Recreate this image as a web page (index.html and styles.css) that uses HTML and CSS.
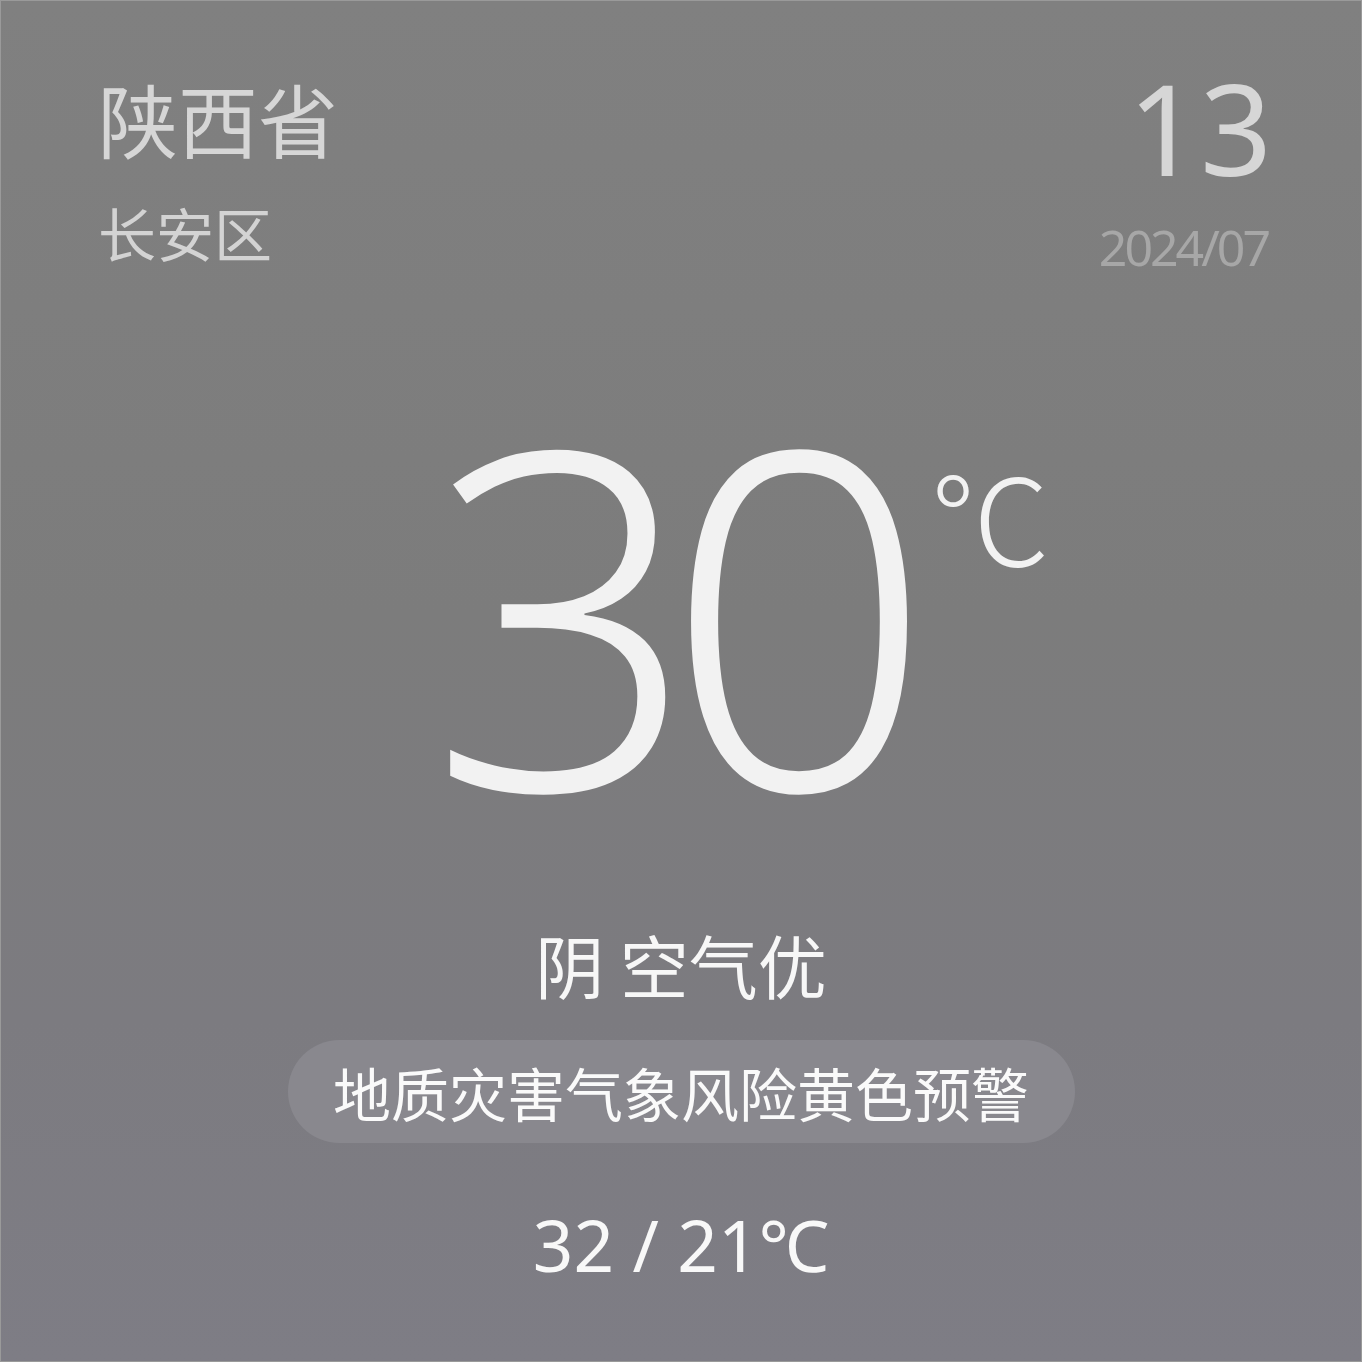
FILE: index.html
```html
<!DOCTYPE html>
<html lang="zh-CN">
<head>
<meta charset="utf-8">
<title>天气</title>
<link rel="stylesheet" href="styles.css">
</head>
<body>
<div class="card">
  <div class="top">
    <div class="loc">
      <div class="prov">陕西省</div>
      <div class="dist">长安区</div>
    </div>
    <div class="date">
      <div class="day">13</div>
      <div class="month">2024/07</div>
    </div>
  </div>
  <div class="main">
    <div class="temp">
      <span class="num">30</span>
      <span class="unit">℃</span>
    </div>
  </div>
  <div class="cond">阴 空气优</div>
  <div class="alert-row">
    <div class="alert">地质灾害气象风险黄色预警</div>
  </div>
  <div class="range">32 / 21℃</div>
</div>
</body>
</html>
```

FILE: styles.css
```css
html, body {
  margin: 0;
  padding: 0;
}

body {
  width: 1362px;
  height: 1362px;
  font-family: "Noto Sans", "Noto Sans CJK SC", sans-serif;
}

.card {
  width: 1362px;
  height: 1362px;
  box-sizing: border-box;
  border: 1px solid #9a9a9a;
  background: linear-gradient(180deg, #808080 0%, #7c7c7c 45%, #7c7b80 75%, #7e7d85 100%);
  display: flex;
  flex-direction: column;
}

.top {
  display: flex;
  justify-content: space-between;
  padding: 0 89px 0 97px;
}

.loc {
  font-family: "Noto Sans CJK SC", sans-serif;
  color: #d6d6d6;
}

.prov {
  font-size: 80px;
  line-height: 80px;
  margin-top: 76px;
}

.dist {
  font-size: 58px;
  line-height: 58px;
  margin-top: 46px;
  color: #d3d3d3;
}

.date {
  text-align: right;
  font-family: "Noto Sans", sans-serif;
}

.day {
  font-size: 126px;
  line-height: 126px;
  margin-top: 63px;
  color: #d6d6d6;
  font-weight: 400;
}

.month {
  font-size: 50px;
  line-height: 50px;
  margin-top: 32px;
  margin-right: 4px;
  letter-spacing: -3px;
  color: #a7a7a7;
}

.main {
  display: flex;
  justify-content: center;
  margin-top: 101px;
}

.temp {
  position: relative;
  display: inline-block;
}

.num {
  display: block;
  font-family: "Noto Sans", sans-serif;
  font-weight: 300;
  font-size: 470px;
  line-height: 470px;
  letter-spacing: -32px;
  margin-right: 32px;
  color: #f2f2f2;
}

.unit {
  position: absolute;
  left: 100%;
  top: 81px;
  font-family: "Noto Sans CJK SC", sans-serif;
  font-weight: 300;
  font-size: 120px;
  line-height: 120px;
  color: #f2f2f2;
  margin-left: -3px;
}

.cond {
  text-align: center;
  font-family: "Noto Sans CJK SC", sans-serif;
  font-size: 69px;
  line-height: 69px;
  margin-top: 87px;
  color: #f7f7f7;
}

.alert-row {
  display: flex;
  justify-content: center;
  margin-top: 41px;
}

.alert {
  width: 787px;
  height: 103px;
  box-sizing: border-box;
  border-radius: 52px;
  background: #89888e;
  display: flex;
  align-items: center;
  justify-content: center;
  font-family: "Noto Sans CJK SC", sans-serif;
  font-size: 58px;
  color: #fafafa;
}

.range {
  text-align: center;
  font-family: "Noto Sans", "Noto Sans CJK SC", sans-serif;
  font-size: 71px;
  line-height: 71px;
  margin-top: 66px;
  color: #f8f8f8;
}
```
